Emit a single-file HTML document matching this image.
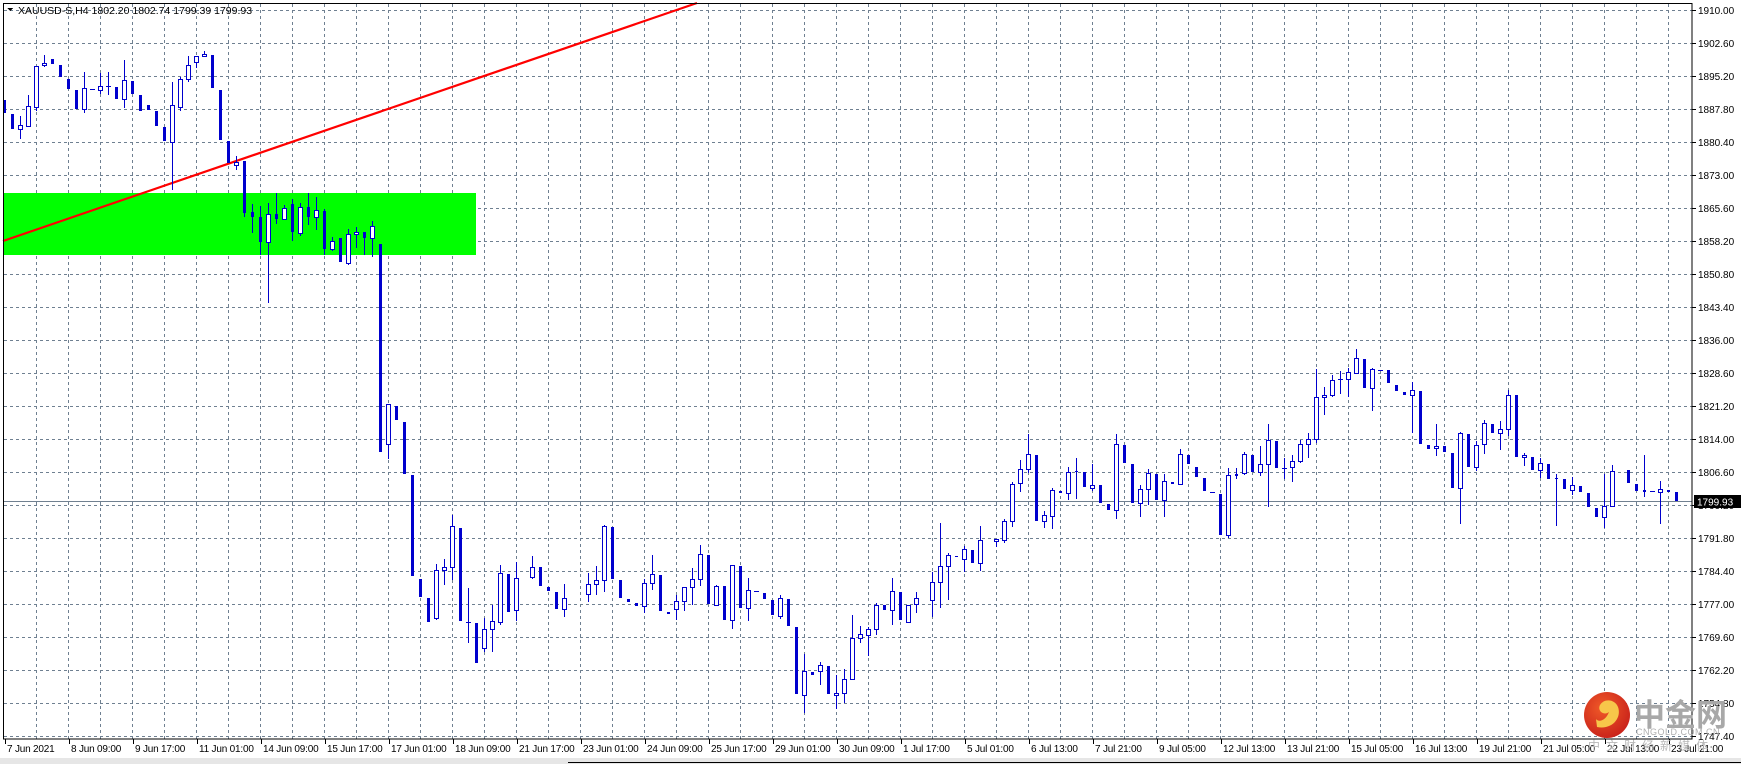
<!DOCTYPE html>
<html><head><meta charset="utf-8">
<style>
html,body{margin:0;padding:0;background:#fff;}
body{width:1741px;height:764px;overflow:hidden;position:relative;font-family:"Liberation Sans",Tahoma,sans-serif;}
svg{position:absolute;left:0;top:0;}
.wm{position:absolute;color:#9a9a9a;font-family:"Liberation Sans","Noto Sans CJK SC",sans-serif;white-space:nowrap;}
</style></head>
<body>
<svg id="c" width="1741" height="764" viewBox="0 0 1741 764" shape-rendering="crispEdges">
<rect x="0" y="758" width="1741" height="6" fill="#e6e6e6"/>
<line x1="568" y1="762.5" x2="1741" y2="762.5" stroke="#000"/>
<g id="grid" stroke="#6f8091" stroke-width="1" stroke-dasharray="3,3"></g>
<rect x="3" y="193" width="473" height="62" fill="#00ff00"/>
<line x1="3" y1="241" x2="697" y2="3" stroke="#ff0000" stroke-width="2.2" shape-rendering="auto"/>
<line x1="3" y1="501.5" x2="1692" y2="501.5" stroke="#708090"/>
<g id="candles"></g>
<rect x="3.5" y="3.5" width="1688.5" height="735.5" fill="none" stroke="#000"/>
<g id="axis" font-family="Liberation Sans, Tahoma, sans-serif" font-size="10" fill="#000"></g>
<rect x="1694" y="495" width="47" height="13" fill="#000"/>
<text x="1697" y="505.5" font-family="Liberation Sans, Tahoma, sans-serif" font-size="10" fill="#fff">1799.93</text>
<polygon points="7,8 13,8 10,11" fill="#000"/>
<text x="18" y="14" font-family="Liberation Sans, Tahoma, sans-serif" font-size="10.5" fill="#000">XAUUSD-S,H4  1802.20 1802.74 1799.39 1799.93</text>
<g shape-rendering="auto">
<defs><radialGradient id="lg" cx="40%" cy="35%" r="70%"><stop offset="0" stop-color="#f05a28"/><stop offset="1" stop-color="#c8201a"/></radialGradient></defs>
<circle cx="1607" cy="715" r="23" fill="url(#lg)"/>
<path d="M1597 727 C1612 730 1622 718 1618 707 C1615 699 1604 698 1600 705 C1597 711 1604 716 1609 712 C1605 722 1598 722 1596 719 Z" fill="#f7c64a"/>
</g>
</svg>
<div class="wm" style="left:1634px;top:690px;font-size:31px;font-weight:bold;color:#a8a8a8;letter-spacing:0px;">中金网</div>
<div class="wm" style="left:1636px;top:727px;font-size:9px;color:#b0b0b0;letter-spacing:0.5px;">CNGOLD.COM.CN</div>
<div class="wm" style="left:1588px;top:737px;font-size:12px;color:#b8b8b8;letter-spacing:6px;">中文财经新媒体</div>
<script>
(function(){
var NS="http://www.w3.org/2000/svg";
function el(p,n,a,t){var e=document.createElementNS(NS,n);for(var k in a)e.setAttribute(k,a[k]);if(t)e.textContent=t;p.appendChild(e);return e;}
var g=document.getElementById('grid');
for(var k=0;k<=22;k++){var y=Math.round(10.3+33*k)+0.5;el(g,'line',{x1:4,y1:y,x2:1692,y2:y});}
for(var x=36;x<=1668;x+=32){el(g,'line',{x1:x+0.5,y1:4,x2:x+0.5,y2:739});}
var ax=document.getElementById('axis');
var pl=["1910.00","1902.60","1895.20","1887.80","1880.40","1873.00","1865.60","1858.20","1850.80","1843.40","1836.00","1828.60","1821.20","1814.00","1806.60","1799.20","1791.80","1784.40","1777.00","1769.60","1762.20","1754.80","1747.40"];
for(var k=0;k<pl.length;k++){var y=Math.round(10.3+33*k);el(ax,'line',{x1:1692,y1:y+0.5,x2:1696,y2:y+0.5,stroke:'#000'});el(ax,'text',{x:1698,y:y+4},pl[k]);}
var tl=["7 Jun 2021","8 Jun 09:00","9 Jun 17:00","11 Jun 01:00","14 Jun 09:00","15 Jun 17:00","17 Jun 01:00","18 Jun 09:00","21 Jun 17:00","23 Jun 01:00","24 Jun 09:00","25 Jun 17:00","29 Jun 01:00","30 Jun 09:00","1 Jul 17:00","5 Jul 01:00","6 Jul 13:00","7 Jul 21:00","9 Jul 05:00","12 Jul 13:00","13 Jul 21:00","15 Jul 05:00","16 Jul 13:00","19 Jul 21:00","21 Jul 05:00","22 Jul 13:00","23 Jul 21:00"];
for(var k=0;k<tl.length;k++){var x=5+64*k;el(ax,'line',{x1:x+0.5,y1:739,x2:x+0.5,y2:744,stroke:'#000'});el(ax,'text',{x:x+2,y:752,'letter-spacing':'-0.2'},tl[k]);}
var segs=[
[40,0,[
['f',180,218],['f',222,266],['h',256,268,228,296],['h',199,258,165,260],['h',78,200,78,212],['h',70,76,45,80],['f',57,71],['f',75,110],['f',117,146],['f',150,206],
['h',145,208,96,220],['d',148],['h',139,151,100,162],['d',139,96,165],['f',141,176],['h',121,178,60,203],['f',123,161],['f',165,212],['f',196,209],['f',213,257],
['f',262,302],['h',196,305,126,450],['h',118,200,110,212],['h',76,118,48,125],['h',48,67,48,84],['h',43,49,33,52],['f',45,143],['f',150,299],['f',303,370],['h',365,376,348,390],
['f',363,518,363,530],['f',517,532,492,578],['f',532,607,498,645],['h',522,607,489,788],['f',522,538,460,551],['h',505,536,495,540],['f',493,577,478,602],['h',501,580,490,587],['f',500,530,460,555],['h',511,532,472,570],
['f',514,628,508,645],['h',603,628,592,633],['f',595,665],['h',582,668,568,675],['h',577,583,560,625],['f',577,595,575,645],['h',559,595,543,650]]],
[230,47,[
['f',42,665],['h',522,643,522,688],['f',528,570],['f',576,731],['f',735,1037],['f',1047,1100],['f',1104,1175],['h',1021,1163,1002,1170],['h',1012,1021,987,1065],['h',888,1012,855,1050],
['f',894,1172],['d',1177,1075,1238],['f',1179,1298],['h',1197,1255,1165,1265],['h',1174,1198,1125,1265],['h',1030,1175,1005,1185],['f',1032,1145],['h',1045,1141,996,1172],null,['h',1012,1042,978,1046],
['f',1012,1067],['f',1072,1082],['f',1086,1136],['h',1105,1138,1062,1160],null,null,['h',1063,1093,1028,1115],['h',1051,1063,1008,1095],['h',888,1051,884,1085],['f',891,1046],
['f',1050,1103],['f',1107,1115],['f',1119,1127],['h',1060,1129,1048,1148],['h',1033,1060,975,1080],['f',1035,1142],['f',1146,1151],['h',1114,1138,1095,1170],['h',1072,1114,1072,1142],['h',1048,1072,1014,1124],
['h',972,1048,945,1068],['f',975,1121],['h',1069,1125,1065,1128],['f',1068,1169],['h',1006,1171,1006,1196],['f',1009,1133],['h',1081,1135,1044,1172],['d',1083],['f',1090,1106],['f',1110,1154],
['h',1105,1157,1095,1166],['f',1107,1187]]],
[390,99,[
['f',711,913],['h',843,916,793,970],['f',847,854],['h',826,843,816,884],['f',828,913],['h',910,916,855,958],['h',868,910,837,940],['h',744,868,676,868],['h',733,745,708,760],['h',718,736,710,798],
['h',646,718,640,734],['f',646,659],['h',604,661,565,704],['f',606,691],['h',646,695,644,700],['h',625,643,606,670],null,['h',577,629,546,680],['h',529,577,400,653],['h',496,529,490,630],
['f',497,502],['h',478,508,468,546],['f',480,518],['h',451,520,408,542],null,['h',446,454,446,470],['h',394,451,386,458],['h',283,394,276,410],['h',236,280,210,305],['h',193,236,132,250],
['f',195,392],['h',376,394,364,413],['h',300,379,294,416],['f',303,308],['h',247,310,232,330],['f',243,247,205,326],['f',246,290],['h',286,293,222,302],['f',285,338],['f',342,359],
['h',163,361,132,386],['f',165,218],['f',222,338],['h',298,340,284,380],['h',250,298,238,344],['f',252,330],['h',273,330,252,380],['f',276,281],['h',193,283,178,286],['f',195,221],
['f',231,260],['f',264,302],['d',306],['f',312,434],['h',256,436,235,445],['f',253,257,234,268],['h',193,250,185,254],['f',195,245]]],
[340,157,[
['h',373,397,318,407],['h',300,373,252,500],['f',303,383],['d',384,354,416],['h',364,382,345,425],['h',313,364,300,370],['h',298,313,280,353],['h',172,298,86,308],['h',166,172,142,225],['h',121,166,106,170],
['d',116,93,162],['h',97,116,85,170],['h',55,98,27,100],['f',58,143],['h',88,145,85,212],['d',91],['f',90,130],['f',135,152],['f',156,164],['h',151,166,125,278],
['f',153,311],['f',316,326],['h',317,325,252,347],['f',318,335],['f',339,443],['h',280,445,276,551],['f',282,380],['h',316,382,302,392],['h',250,313,240,341],['f',252,278],
['h',268,280,243,329],['h',166,268,150,289],['f',165,350],['h',346,352,340,377],['f',351,389],['h',370,391,354,413],['f',372,416],['f',414,418,403,557],['f',417,446],['h',436,451,410,466],
['f',438,455],['f',460,500],['f',504,530],['h',498,532,403,563],['h',394,499,375,500],null,['f',390,428],['f',432,452],['f',451,455,345,472],['d',454],
['h',448,457,423,553],['f',450,455],['f',456,482]]]
];
var cg=document.getElementById('candles');var B='#0000cd';
segs.forEach(function(s){var oy=s[0],i0=s[1];s[2].forEach(function(c,j){if(!c)return;var i=i0+j,x=4+8*i;
function Y(z){return Math.round(oy+z/3);}
var t=c[0],a=Y(c[1]),b=c.length>2?Y(c[2]):a;
if(t=='d'){ if(c.length>2){el(cg,'line',{x1:x+0.5,y1:Y(c[2]),x2:x+0.5,y2:Y(c[3]),stroke:B});}
 el(cg,'line',{x1:x-2,y1:a+0.5,x2:x+3,y2:a+0.5,stroke:B});return;}
if(c.length>3){el(cg,'line',{x1:x+0.5,y1:Y(c[3]),x2:x+0.5,y2:Y(c[4]),stroke:B});}
if(t=='f'){el(cg,'rect',{x:x-1,y:a,width:3,height:Math.max(1,b-a),fill:B});}
else{el(cg,'rect',{x:x-1.5,y:a+0.5,width:4,height:Math.max(1,b-a),fill:'#fff',stroke:B});}
});});
})();
</script>
</body></html>
